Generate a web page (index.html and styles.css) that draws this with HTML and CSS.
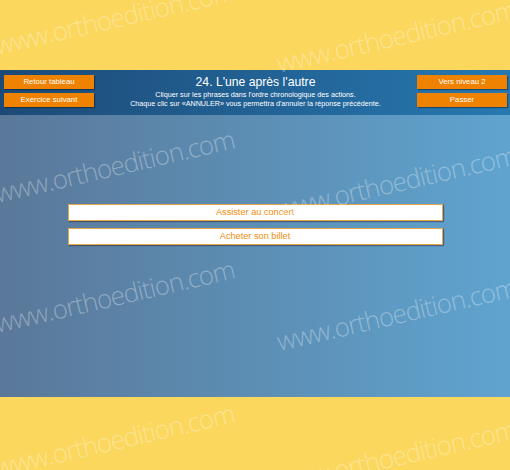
FILE: index.html
```html
<!DOCTYPE html>
<html>
<head>
    <title>L'une après l'autre</title>
    <link rel="stylesheet" href="styles.css">
</head>
<body>
    <div class="page">
        <div class="top-space"></div>

        <div class="header">
            <div class="btn-col">
                <button class="ortho-button">Retour tableau</button>
                <button class="ortho-button">Exercice suivant</button>
            </div>
            <div class="title-block">
                <h1>24. L'une après l'autre</h1>
                <p>Cliquer sur les phrases dans l'ordre chronologique des actions.</p>
                <p>Chaque clic sur «ANNULER» vous permettra d'annuler la réponse précédente.</p>
            </div>
            <div class="btn-col">
                <button class="ortho-button">Vers niveau 2</button>
                <button class="ortho-button">Passer</button>
            </div>
        </div>

        <div class="main">
            <div class="answers">
                <div class="answer">Assister au concert</div>
                <div class="answer">Acheter son billet</div>
            </div>
        </div>

        <!-- watermark layer -->
        <div class="wm wm-1">www.orthoedition.com</div>
        <div class="wm wm-2">www.orthoedition.com</div>
        <div class="wm wm-3">www.orthoedition.com</div>
        <div class="wm wm-4">www.orthoedition.com</div>
        <div class="wm wm-5">www.orthoedition.com</div>
        <div class="wm wm-6">www.orthoedition.com</div>
        <div class="wm wm-7">www.orthoedition.com</div>
        <div class="wm wm-8">www.orthoedition.com</div>
    </div>
</body>
</html>
```

FILE: styles.css
```css
body {
    margin: 0;
    padding: 0;
    background-color: #fbd75e;
    font-family: "Liberation Sans", Arial, sans-serif;
}

.page {
    position: relative;
    width: 510px;
    height: 470px;
    overflow: hidden;
}

.top-space {
    height: 70px;
}

.header {
    height: 45px;
    box-sizing: border-box;
    padding: 5px 3px 0 4px;
    display: flex;
    justify-content: space-between;
    background: linear-gradient(to right, #1c4a77, #2778b1);
}

.btn-col {
    display: flex;
    flex-direction: column;
    gap: 4px;
}

.ortho-button {
    width: 90px;
    height: 14px;
    padding: 0;
    border: none;
    background-color: #ef8200;
    color: #fff;
    font-family: "Liberation Sans", Arial, sans-serif;
    font-size: 7.8px;
    line-height: 14px;
    box-shadow: 1px 1px 1px rgba(0, 0, 0, 0.35);
    cursor: pointer;
}

.title-block {
    flex: 1;
    text-align: center;
    color: #fff;
}

h1 {
    margin: 0 0 2px 0;
    font-size: 12.2px;
    font-weight: normal;
    line-height: 14px;
}

.title-block p {
    margin: 0;
    font-size: 7.2px;
    line-height: 8.5px;
}

.main {
    height: 282px;
    box-sizing: border-box;
    padding-top: 89px;
    background: linear-gradient(to right, #5a7899, #5fa4cf);
}

.answers {
    width: 375px;
    margin: 0 auto;
    display: flex;
    flex-direction: column;
    gap: 7px;
}

.answer {
    height: 17px;
    box-sizing: border-box;
    border: 1px solid #e9a54a;
    background-color: #fff;
    color: #f08c0a;
    font-size: 9.2px;
    line-height: 15px;
    text-align: center;
    box-shadow: 1px 1px 1px rgba(40, 40, 60, 0.5);
    cursor: pointer;
}

/* watermarks */
.wm {
    position: absolute;
    font-family: "Open Sans", "DejaVu Sans", sans-serif;
    font-weight: 300;
    font-size: 26px;
    letter-spacing: -1px;
    line-height: 26px;
    color: rgba(255, 255, 255, 0.33);
    white-space: nowrap;
    transform: rotate(-13deg);
    transform-origin: left bottom;
    pointer-events: none;
}

.wm-1 { left: -2px; top: 32px; }
.wm-2 { left: 280px; top: 50px; }
.wm-3 { left: -2px; top: 180px; }
.wm-4 { left: 280px; top: 196px; }
.wm-5 { left: -2px; top: 310px; }
.wm-6 { left: 280px; top: 328px; }
.wm-7 { left: -2px; top: 454px; }
.wm-8 { left: 280px; top: 470px; }
```
